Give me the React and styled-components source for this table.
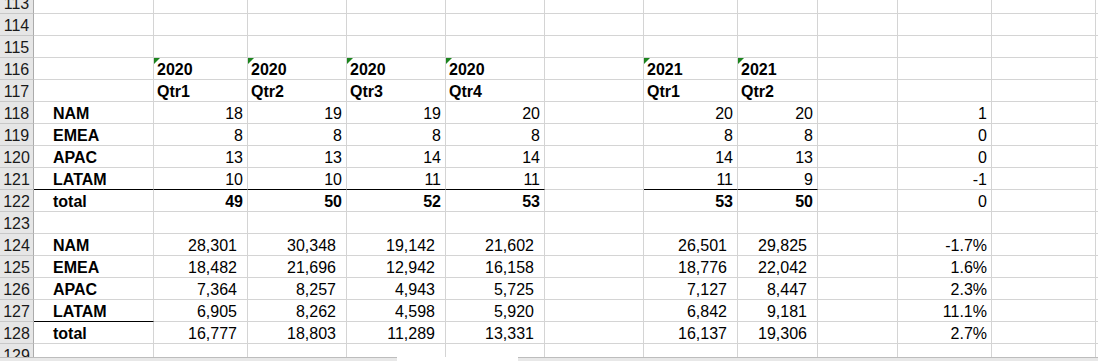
import styled, { createGlobalStyle } from "styled-components";

const GlobalStyle = createGlobalStyle`
  html, body {
    margin: 0;
    padding: 0;
    background: #ffffff;
  }
  body {
    font-family: "Liberation Sans", Arial, sans-serif;
    overflow: hidden;
  }
`;

const GRID = "#d4d4d4";
const COLS = [120, 94, 99, 99, 99, 99, 94, 80, 80, 94, 104];

const Window = styled.div`
  width: 1098px;
  height: 361px;
  display: flex;
  flex-direction: column;
  overflow: hidden;
  background: #fff;
`;

const Viewport = styled.div`
  flex: 1;
  overflow: hidden;
`;

const Rows = styled.div`
  margin-top: -8px;
`;

const Row = styled.div`
  display: grid;
  grid-template-columns: 34px ${COLS.map((w) => `${w}px`).join(" ")} 1fr;
  height: 22px;
`;

const RowHead = styled.div`
  box-sizing: border-box;
  height: 22px;
  background: #e6e6e6;
  border-right: 1px solid #ababab;
  border-bottom: 1px solid #c8c8c8;
  color: #1a1a1a;
  font-size: 16px;
  line-height: 19px;
  padding-top: 2px;
  text-align: center;
`;

const Cell = styled.div`
  position: relative;
  box-sizing: border-box;
  height: 22px;
  border-right: 1px solid ${GRID};
  border-bottom: 1px solid ${(p) => (p.$rule ? "#000" : GRID)};
  font-size: 16px;
  line-height: 19px;
  padding-top: 2px;
  padding-left: ${(p) => (p.$kind === "label" ? "19px" : "3px")};
  padding-right: ${(p) => (p.$kind === "acct" ? "10px" : "4px")};
  text-align: ${(p) => (p.$kind === "label" || p.$kind === "head" ? "left" : "right")};
  font-weight: ${(p) => (p.$bold || p.$kind === "label" || p.$kind === "head" ? 700 : 400)};
  color: #000;
  white-space: nowrap;

  &::before {
    content: "";
    display: ${(p) => (p.$mark ? "block" : "none")};
    position: absolute;
    top: 0;
    left: 0;
    width: 0;
    height: 0;
    border-top: 6px solid #1b841d;
    border-right: 6px solid transparent;
  }
`;

const Footer = styled.div`
  display: flex;
  height: 4px;
`;

const Bar = styled.div`
  box-sizing: border-box;
  width: ${(p) => p.$w || "auto"};
  flex: ${(p) => (p.$w ? "none" : 1)};
  background: ${(p) => (p.$blank ? "#fff" : "#e8e8e8")};
  border-top: 1px solid ${(p) => (p.$blank ? "#fff" : "#bdbdbd")};
`;

const head = (v) => ({ v, kind: "head", mark: /^20/.test(v) });
const label = (v, rule) => ({ v, kind: "label", rule });

const row = (n, a, b, g, j, opts = {}) => {
  const cells = Array(12).fill(null);
  if (a) cells[0] = a;
  if (b)
    b.forEach((v, i) => {
      cells[1 + i] = v;
    });
  if (g)
    g.forEach((v, i) => {
      cells[6 + i] = v;
    });
  if (j) cells[9] = j;
  if (opts.rule) {
    opts.rule.forEach((i) => {
      cells[i] = { ...(cells[i] || { v: "" }), rule: true };
    });
  }
  return { n, cells };
};

const nums = (arr, kind = "num", bold = false) => arr.map((v) => ({ v, kind, bold }));

const upperRule = [0, 1, 2, 3, 4, 6, 7];

const sheet = [
  row(113),
  row(114),
  row(115),
  row(116, null, ["2020", "2020", "2020", "2020"].map(head), ["2021", "2021"].map(head)),
  row(117, null, ["Qtr1", "Qtr2", "Qtr3", "Qtr4"].map(head), ["Qtr1", "Qtr2"].map(head)),
  row(118, label("NAM"), nums(["18", "19", "19", "20"]), nums(["20", "20"]), { v: "1", kind: "num" }),
  row(119, label("EMEA"), nums(["8", "8", "8", "8"]), nums(["8", "8"]), { v: "0", kind: "num" }),
  row(120, label("APAC"), nums(["13", "13", "14", "14"]), nums(["14", "13"]), { v: "0", kind: "num" }),
  row(121, label("LATAM"), nums(["10", "10", "11", "11"]), nums(["11", "9"]), { v: "-1", kind: "num" }, { rule: upperRule }),
  row(122, label("total"), nums(["49", "50", "52", "53"], "num", true), nums(["53", "50"], "num", true), { v: "0", kind: "num" }),
  row(123),
  row(124, label("NAM"), nums(["28,301", "30,348", "19,142", "21,602"], "acct"), nums(["26,501", "29,825"], "acct"), { v: "-1.7%", kind: "num" }),
  row(125, label("EMEA"), nums(["18,482", "21,696", "12,942", "16,158"], "acct"), nums(["18,776", "22,042"], "acct"), { v: "1.6%", kind: "num" }),
  row(126, label("APAC"), nums(["7,364", "8,257", "4,943", "5,725"], "acct"), nums(["7,127", "8,447"], "acct"), { v: "2.3%", kind: "num" }),
  row(127, label("LATAM", true), nums(["6,905", "8,262", "4,598", "5,920"], "acct"), nums(["6,842", "9,181"], "acct"), { v: "11.1%", kind: "num" }),
  row(128, label("total"), nums(["16,777", "18,803", "11,289", "13,331"], "acct"), nums(["16,137", "19,306"], "acct"), { v: "2.7%", kind: "num" }),
  row(129),
];

export default function App() {
  return (
    <>
      <GlobalStyle />
      <Window>
        <Viewport>
          <Rows>
            {sheet.map((r) => (
              <Row key={r.n}>
                <RowHead>{r.n}</RowHead>
                {r.cells.map((c, i) => (
                  <Cell
                    key={i}
                    $kind={c?.kind}
                    $bold={c?.bold}
                    $rule={c?.rule}
                    $mark={c?.mark}
                  >
                    {c?.v}
                  </Cell>
                ))}
              </Row>
            ))}
          </Rows>
        </Viewport>
        <Footer>
          <Bar $w="397px" />
          <Bar $w="121px" $blank />
          <Bar />
        </Footer>
      </Window>
    </>
  );
}
